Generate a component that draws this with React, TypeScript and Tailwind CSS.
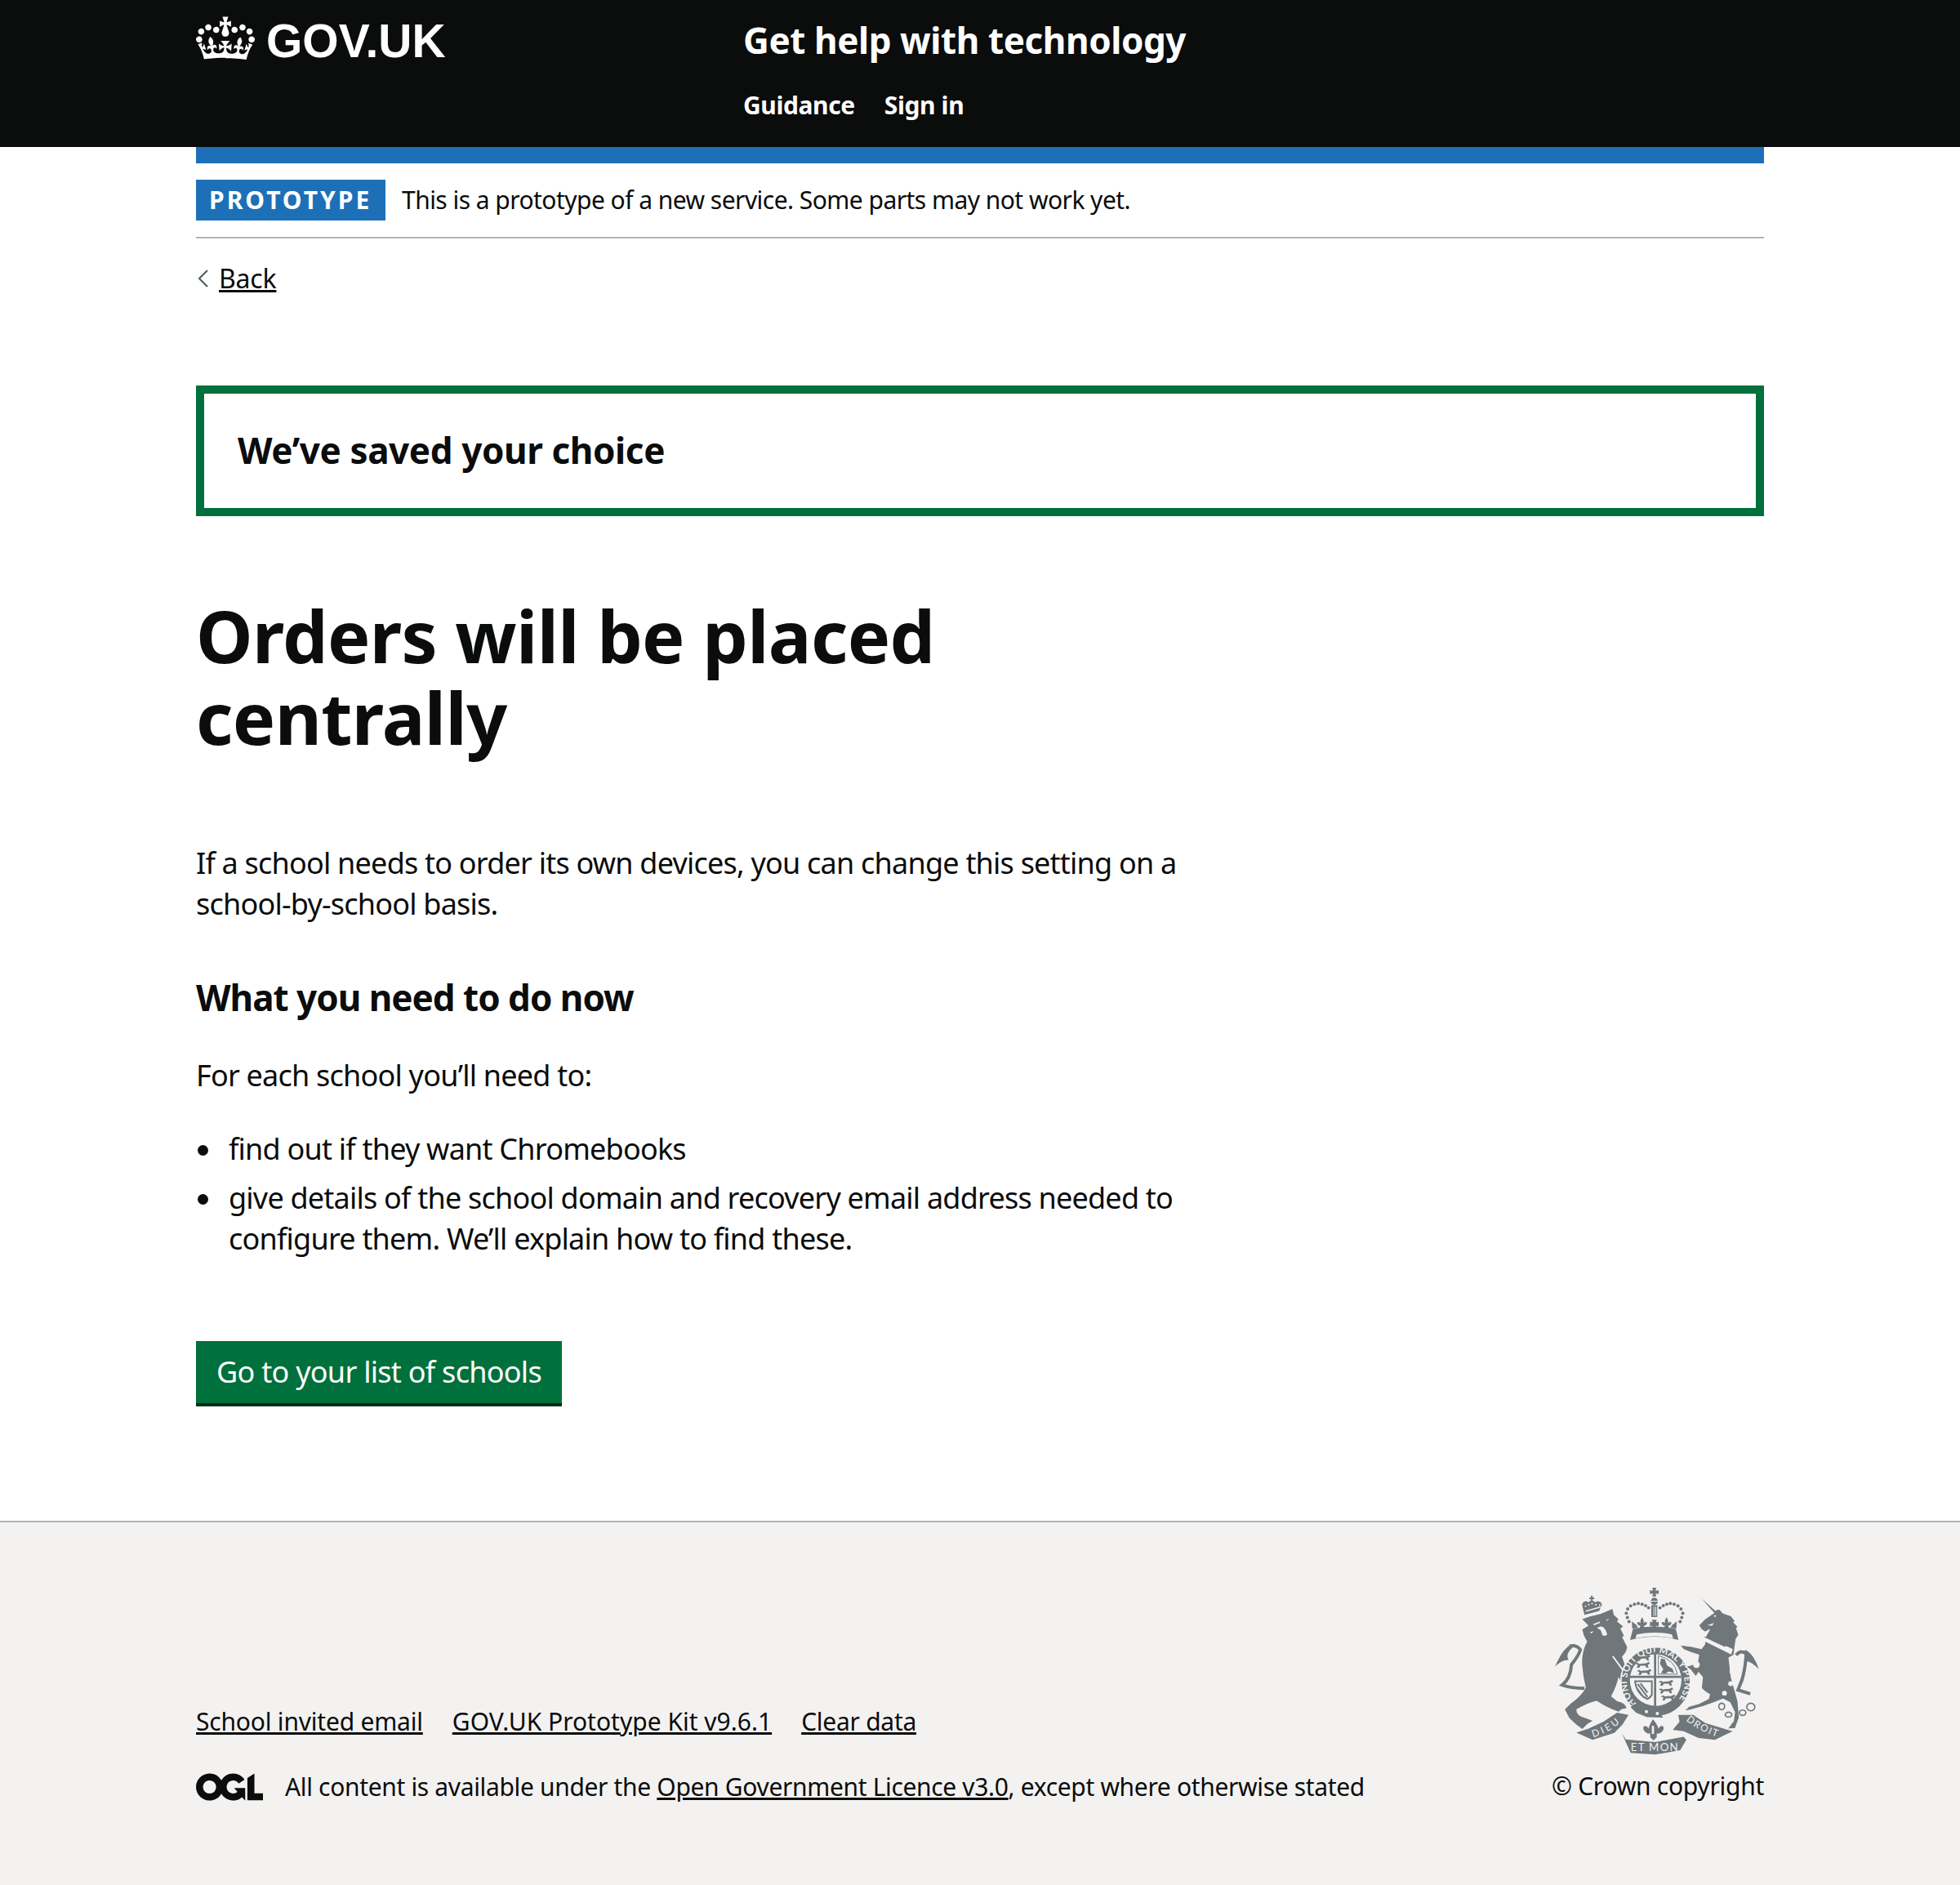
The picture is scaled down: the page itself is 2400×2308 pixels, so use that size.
const font = 'font-["Noto_Sans",sans-serif]';

const Crown = () => (
  <svg viewBox="0 0 132 97" className="w-[72px] h-[54px] fill-white">
    <path
      fillRule="evenodd"
      d="M25 30.2c3.5 1.5 7.7-.2 9.1-3.7 1.5-3.6-.2-7.8-3.9-9.2-3.6-1.4-7.6.3-9.1 3.9-1.4 3.5.3 7.5 3.9 9zM9 39.5c3.6 1.5 7.8-.2 9.2-3.7 1.5-3.6-.2-7.8-3.9-9.1-3.6-1.5-7.6.2-9.1 3.8-1.4 3.5.3 7.5 3.8 9zM4.4 57.2c3.5 1.5 7.7-.2 9.1-3.8 1.5-3.6-.2-7.7-3.9-9.1-3.5-1.5-7.6.3-9.1 3.8-1.4 3.5.3 7.6 3.9 9.1zm38.3-21.4c3.5 1.5 7.7-.2 9.1-3.8 1.5-3.6-.2-7.7-3.9-9.1-3.6-1.5-7.6.3-9.1 3.8-1.3 3.6.4 7.7 3.9 9.1zm64.4-5.6c-3.6 1.5-7.8-.2-9.1-3.7-1.5-3.6.2-7.8 3.8-9.2 3.6-1.4 7.7.3 9.2 3.9 1.3 3.5-.4 7.5-3.9 9zm15.9 9.3c-3.6 1.5-7.7-.2-9.1-3.7-1.5-3.6.2-7.8 3.7-9.1 3.6-1.5 7.7.2 9.2 3.8 1.5 3.5-.3 7.5-3.8 9zm4.7 17.7c-3.6 1.5-7.8-.2-9.2-3.8-1.5-3.6.2-7.7 3.9-9.1 3.6-1.5 7.7.3 9.2 3.8 1.3 3.5-.4 7.6-3.9 9.1zM89.3 35.8c-3.6 1.5-7.8-.2-9.2-3.8-1.4-3.6.2-7.7 3.9-9.1 3.6-1.5 7.7.3 9.2 3.8 1.4 3.6-.3 7.7-3.9 9.1zM69.7 17.7l8.9 4.7V9.3l-8.9 2.8c-.2-.3-.5-.6-.9-.9L72.4 0H59.6l3.5 11.2c-.3.3-.6.5-.9.9l-8.8-2.8v13.1l8.8-4.7c.3.3.6.7.9.9l-5 15.4v.1c-.2.8-.4 1.6-.4 2.4 0 4.1 3.1 7.5 7 8.1h.2c.3 0 .7.1 1 .1.4 0 .7 0 1-.1h.2c4-.6 7.1-4.1 7.1-8.1 0-.8-.1-1.7-.4-2.4V34l-5.1-15.4c.4-.2.7-.6 1-.9zM66 92.8c16.9 0 32.8 1.1 47.1 3.2 4-16.9 8.9-26.7 14-33.5l-9.6-3.4c1 4.9 1.1 7.2 0 10.2-1.5-1.4-3-4.3-4.2-8.7L108.6 76c2.8-2 5-3.2 7.5-3.3-4.4 9.4-10 11.9-13.6 11.2-4.3-.8-6.3-4.6-5.6-7.9 1-4.7 5.7-5.9 8-.5 4.3-8.7-3-11.4-7.6-8.8 7.1-7.2 7.9-13.5 2.1-21.1-8 6.1-8.1 12.3-4.5 20.8-4.7-5.4-12.1-2.5-9.5 6.2 3.4-5.2 7.9-2 7.2 3.1-.6 4.3-6.4 7.8-13.5 7.2-10.3-.9-10.9-8-11.2-13 2.5-.5 7.1 1.8 11 7.3L80.2 60c-4.1 4.4-8 5.3-12.3 5.4 1.4-4.4 8-11.6 8-11.6H55.5s6.4 7.2 7.9 11.6c-4.2-.1-8-1-12.3-5.4l1.4 16.4c3.9-5.5 8.5-7.7 10.9-7.3-.3 5-.9 12.1-11.1 13-7.2.6-12.9-2.9-13.5-7.2-.7-5 3.8-8.3 7.1-3.1 2.7-8.7-4.6-11.6-9.4-6.2 3.7-8.5 3.6-14.7-4.6-20.8-5.8 7.6-5 13.9 2.2 21.1-4.7-2.6-11.9.1-7.7 8.8 2.3-5.5 7.1-4.2 8.1.5.7 3.3-1.3 7.1-5.7 7.9-3.5.7-9-1.8-13.5-11.2 2.5.1 4.7 1.3 7.5 3.3l-4.7-15.4c-1.2 4.4-2.7 7.2-4.3 8.7-1.1-3-.9-5.3 0-10.2l-9.5 3.4c5 6.9 9.9 16.7 14 33.5 14.8-2.1 30.8-3.2 47.7-3.2z"
    />
  </svg>
);

const Ogl = () => (
  <svg viewBox="0 0 483.2 195.7" className="w-[82px] h-[34px] shrink-0 fill-[#0b0c0c]">
    <path d="M421.5 142.8V.1l-50.7 32.3v161.1h112.4v-50.7zm-122.3-9.6A47.12 47.12 0 0 1 221 97.8c0-26 21.1-47.1 47.1-47.1 16.7 0 31.4 8.7 39.7 21.8l42.7-27.2A97.63 97.63 0 0 0 268.1 0c-36.5 0-68.3 20.1-85.1 49.7A98 98 0 0 0 97.8 0C43.9 0 0 43.9 0 97.8s43.9 97.8 97.8 97.8c36.5 0 68.3-20.1 85.1-49.7a97.76 97.76 0 0 0 149.6 25.4l19.4 22.2h3v-87.8h-80l24.3 27.5zM97.8 145c-26 0-47.1-21.1-47.1-47.1s21.1-47.1 47.1-47.1 47.2 21 47.2 47S123.8 145 97.8 145" />
  </svg>
);

const bg = "#f3f2f1";
const ink = "#6f777b";

// small lion passant for the shield quarters
const Passant = ({ x, y }: { x: number; y: number }) => (
  <path transform={`translate(${x} ${y})`} d="M0 5l9-5 6 4 26-2 9-5 5 6-8 5 3 11-9-2-3-6-18 0-5 8-9-1 5-9-7-4z" />
);

const Fleur = ({ x, y }: { x: number; y: number }) => (
  <path transform={`translate(${x} ${y})`} d="M0-32q8 12 6 22 6-6 12-2 0 12-12 12l4 10H-10l4-10q-12 0-12-12 6-4 12 2-2-10 6-22z" />
);

// coat of arms, hand drawn on the 900x720 grid of the zoomed crop
const Crest = ({ className }: { className: string }) => (
  <svg viewBox="60 60 780 640" className={className}>
    {/* lion's crown */}
    <path d="M180 172l-8-34a13 13 0 0 1 22-12 14 14 0 0 1 10-6v-6h-6v-6h6v-7h6v7h6v6h-6v6a14 14 0 0 1 10 6 14 14 0 0 1 24 10l-10 22z" />
    <g fill={bg}>
      <circle cx="184" cy="140" r="3" />
      <circle cx="196" cy="134" r="3" />
      <circle cx="208" cy="130" r="3" />
      <circle cx="222" cy="134" r="3" />
      <circle cx="236" cy="136" r="3" />
      <path d="M184 156l56-16 1 5-56 16z" />
    </g>
    {/* lion */}
    <path d="M172 188L200 178 240 168 283 150 288 172 305 188 300 196 322 215 312 222 326 250 318 252 337 290Q335 310 318 325L338 385 352 418 338 442 322 428 305 400Q300 430 278 472L300 490Q330 495 335 515L318 518 305 528 280 518Q250 505 225 488 190 495 150 520 150 545 185 552L210 562 192 572 172 592 150 575 125 552 108 520 130 498Q170 470 185 440 175 400 172 360 168 310 190 270L178 248 172 225 195 212z" />
    <path fill={bg} d="M212 206l26-10-2 6-20 8zM240 214q18 4 24 30-8 8-18 2l-6-18-14-8zM272 186l-12 4 2 4zM286 322l52 70-6 2-50-68zM200 236l14-4-8 8z" />
    {/* lion's tail */}
    <path fill="none" stroke={ink} strokeWidth="12" d="M180 442Q130 442 98 430 130 405 132 355 160 320 165 300 150 280 125 287" />
    <path d="M132 280Q100 295 72 362 98 336 122 338 108 318 136 292z" />
    {/* crown over the shield */}
    <path d="M430 72h14l-2 11 11-2v14l-11-2 2 11h-14l2-11-11 2v-14l11 2z" />
    <circle cx="437" cy="122" r="13" />
    <path fill={bg} d="M424 120h26v3h-26z" />
    <path d="M426 136h22v44h-22z" />
    <path fill={bg} d="M434 142h3v34h-3zM441 142h3v34h-3z" />
    <Fleur x={392} y={212} />
    <Fleur x={482} y={212} />
    <path d="M428 190h18l-3 10 10-3v18l-10-3 3 10h-18l3-10-10 3v-18l10 3zM356 222l-2-26 16 12 8 12zM518 222l2-26-16 12-8 12z" />
    <path d="M358 224q78-18 158 0l10 40q-88-24-178 0z" />
    <path fill={bg} d="M368 258q70-14 138 0l-4-14q-64-14-130 0z" />
    {[
      [338, 182], [334, 166], [339, 150], [350, 139], [364, 133], [378, 130], [392, 133], [405, 138], [416, 146],
      [458, 146], [470, 138], [483, 133], [496, 130], [510, 133], [524, 139], [535, 150], [542, 166], [538, 182], [532, 197], [344, 197],
    ].map(([cx, cy], i) => (
      <circle key={i} cx={cx} cy={cy} r="6" />
    ))}
    {/* garter */}
    <circle cx="442" cy="418" r="128" stroke={bg} strokeWidth="5" />
    <circle cx="442" cy="412" r="95" fill={bg} />
    <path fill="none" id="garter" d="M372 498A106 106 0 1 1 512 498" />
    <text fontFamily="Lato, sans-serif" fontSize="34" fontWeight="700" fill={bg}>
      <textPath href="#garter" textLength="490" lengthAdjust="spacing">HONI SOIT QUI MAL Y PENSE</textPath>
    </text>
    <path d="M360 500l30 14 30 14 36 4 14 18-60-2-40-16-20-20z" />
    <circle cx="408" cy="528" r="6" fill={bg} />
    <circle cx="448" cy="535" r="6" fill={bg} />
    {/* shield quarters */}
    <path d="M346 396h190v8H346zM436 308h8v200h-8z" />
    <Passant x={368} y={322} />
    <Passant x={366} y={348} />
    <Passant x={372} y={374} />
    <Passant x={452} y={414} />
    <Passant x={452} y={442} />
    <Passant x={460} y={468} />
    <path d="M462 332l14 4 8 22 20 12 6 16-20-6-12 8-16-2 8-14-12-20z" />
    <path fill="none" stroke={ink} strokeWidth="3" d="M452 322q60 14 70 68h-70z" />
    <path fill="none" stroke={ink} strokeWidth="6" d="M366 416h62v50q-6 10-16 16-40-18-46-66zM376 426l36 48M386 424l26 34M372 440l26 36" />
    {/* unicorn */}
    <path stroke={bg} strokeWidth="4" d="M588 88L662 155 675 148 690 165 720 175 735 195 730 200 745 215 740 222 748 245 738 262 730 320 712 330 720 400 745 490 750 550 735 590 705 592 728 562 732 530 715 495 690 482Q660 495 620 508L572 522 545 526 565 508 600 498 636 480 640 465Q615 450 610 440L614 402 600 385 590 400 570 375 552 362 585 352 596 345 600 320 570 310 545 300 530 282 575 288 610 296 622 280 626 250 640 226 625 236 610 226 600 210 625 185 655 165z" />
    <path fill={bg} d="M626 250l100 48-6 20-100-50zM632 210l24-8-6 10zM655 175l10-2-4 8z" />
    <path d="M630 252l6-9 6 7 7-8 5 12 8-6 5 12 9-6 4 13 9-5 5 13 9-4 4 14-12 4-76-36z" />
    <circle cx="603" cy="270" r="12" fill={bg} />
    <circle cx="592" cy="355" r="12" fill={bg} />
    <circle cx="725" cy="380" r="11" fill={bg} />
    <circle cx="718" cy="425" r="9" fill={bg} />
    <circle cx="695" cy="460" r="9" fill={bg} />
    <path fill="none" stroke={ink} strokeWidth="5" d="M685 497a11 12 0 1 0 .1 0zM710 530a12 9 0 1 0 .1 0zM762 522a12 10 0 1 0 .1 0zM792 497a15 14 0 1 0 .1 0z" />
    <path fill="none" stroke={ink} strokeWidth="12" d="M738 320Q755 298 775 315 772 370 760 410L745 448 790 462" />
    <path d="M770 300Q800 310 822 372 795 345 775 342z" />
    {/* motto scrolls */}
    <path d="M150 605L195 590 250 565 300 532 342 540 320 575 290 606 210 632z" />
    <path d="M318 608L332 630 440 640 545 620 555 632 532 670 440 686 350 680z" />
    <path d="M525 540L580 540 625 570 725 600 660 632 600 625 545 600 505 595 530 565z" />
    <path d="M432 556q18 22 20 34 8-14 18-8 6 16-14 26h-10v14l-12 12-12-12v-14h-10q-20-10-14-26 10-6 18 8 2-12 16-34z" />
    <path fill={bg} d="M428 580h8v30h-8z" />
    <path fill="none" id="dieu" d="M212 622Q270 606 318 562" />
    <path fill="none" id="droit" d="M553 560Q600 600 672 622" />
    <text fontFamily="Lato, sans-serif" fontSize="36" fill={bg}>
      <textPath href="#dieu" textLength="112">DIEU</textPath>
    </text>
    <text fontFamily="Lato, sans-serif" fontSize="36" fill={bg}>
      <textPath href="#droit" textLength="130">DROIT</textPath>
    </text>
    <text x="350" y="672" fontFamily="Lato, sans-serif" fontSize="40" fill={bg} textLength="174">ET MON</text>
  </svg>
);

export default function App() {
  return (
    <div className={`${font} min-h-[2308px] flex flex-col bg-white text-[#0b0c0c] text-[36px] leading-[50px] tracking-[-0.78px]`}>
      <header className="bg-[#0b0c0c] text-white h-[180px] px-[240px] flex">
        <div className="w-[670px] flex items-start pt-[20px] gap-[14px]">
          <Crown />
          <span className="font-bold text-[57px] leading-[60px] font-['Liberation_Sans',sans-serif] tracking-normal">GOV.UK</span>
        </div>
        <div className="pt-[24px]">
          <div className="font-bold text-[44px] leading-[50px] tracking-[-0.42px]">Get help with technology</div>
          <nav className="flex gap-[36px] mt-[30px] font-bold text-[30px] leading-[50px] tracking-[-0.4px]">
            <span>Guidance</span>
            <span>Sign in</span>
          </nav>
        </div>
      </header>

      <div className="px-[240px] flex-1">
        <div className="h-[20px] bg-[#1d70b8]" />
        <div className="h-[92px] border-b-2 border-[#b1b4b6] flex items-start pt-[20px] gap-[20px]">
          <span className="bg-[#1d70b8] text-white font-bold text-[30px] leading-[50px] tracking-[3px] px-[16px] h-[50px] w-[232px] whitespace-nowrap">PROTOTYPE</span>
          <span className="text-[30px] leading-[50px] tracking-[-0.54px]">This is a prototype of a new service. Some parts may not work yet.</span>
        </div>
        <div className="mt-[24px] flex items-center h-[50px] text-[32px] tracking-[-0.2px]">
          <svg viewBox="0 0 12 22" className="w-[12px] h-[22px] ml-[3px] mr-[13px] stroke-[#505a5f] fill-none stroke-[2px]">
            <path d="M11 1L1 11l10 10" />
          </svg>
          <a className="underline">Back</a>
        </div>

        <div className="mt-[106px] h-[160px] border-[10px] border-[#00703c] flex items-center px-[41px] pb-[2px]">
          <h2 className="font-bold text-[44px] leading-[50px] tracking-[-0.4px]">We’ve saved your choice</h2>
        </div>

        <h1 className="mt-[96px] font-bold text-[88px] leading-[100px] w-[1000px] tracking-[-0.63px]">Orders will be placed centrally</h1>

        <div className="w-[1240px]">
          <p className="mt-[104px]">If a school needs to order its own devices, you can change this setting on a school-by-school basis.</p>
          <h2 className="mt-[59px] font-bold text-[44px] leading-[60px] tracking-[-1px]">What you need to do now</h2>
          <p className="mt-[41px]">For each school you’ll need to:</p>
          <ul className="mt-[40px] flex flex-col gap-[10px]">
            <li className="flex">
              <span className="w-[40px] h-[50px] shrink-0 flex items-center pt-[2px]"><span className="block w-[13px] h-[13px] ml-[2px] rounded-full bg-[#0b0c0c]" /></span>
              <span>find out if they want Chromebooks</span>
            </li>
            <li className="flex">
              <span className="w-[40px] h-[50px] shrink-0 flex items-center pt-[2px]"><span className="block w-[13px] h-[13px] ml-[2px] rounded-full bg-[#0b0c0c]" /></span>
              <span>give details of the school domain and recovery email address needed to configure them. We’ll explain how to find these.</span>
            </li>
          </ul>
        </div>

        <button className="mt-[100px] h-[76px] mb-[100px] bg-[#00703c] text-white px-[25px] tracking-[-0.72px] shadow-[0_4px_0_#002d18]">Go to your list of schools</button>
      </div>

      <footer className="border-t-2 border-[#b1b4b6] bg-[#f3f2f1] h-[446px] px-[240px] flex justify-between text-[30px] leading-[40px] tracking-[-0.34px]">
        <div className="pt-[224px]">
          <div className="flex gap-[36px]">
            <a className="underline tracking-[-0.2px]">School invited email</a>
            <a className="underline tracking-[0px]">GOV.UK Prototype Kit v9.6.1</a>
            <a className="underline tracking-[-0.27px]">Clear data</a>
          </div>
          <div className="flex items-center gap-[27px] mt-[40px]">
            <Ogl />
            <span>All content is available under the <a className="underline">Open Government Licence v3.0</a>, except where otherwise stated</span>
          </div>
        </div>
        <div className="pt-[76px] flex flex-col items-end">
          <Crest className="w-[260px] h-[213px] fill-[#6f777b]" />
          <span className="mt-[14px] tracking-[-0.27px]">© Crown copyright</span>
        </div>
      </footer>
    </div>
  );
}
